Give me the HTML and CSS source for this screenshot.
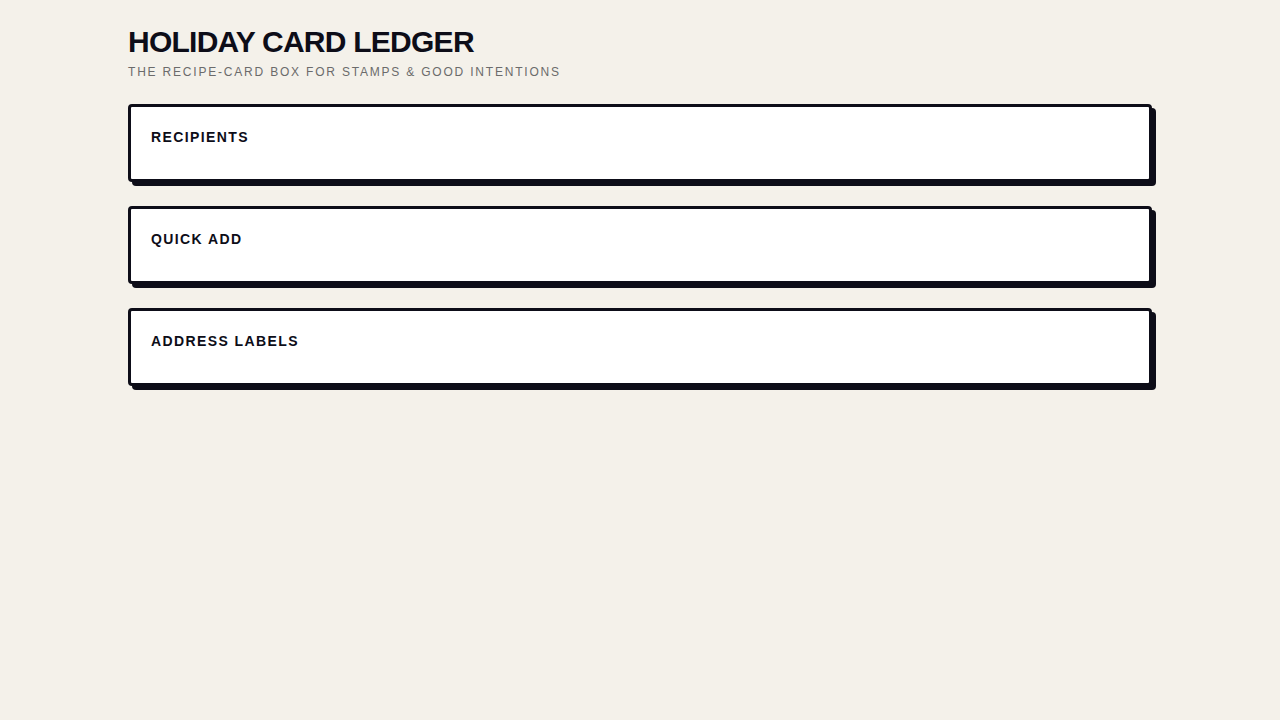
FILE: index.html
```html
<!DOCTYPE html>
<html>
<head>
<meta charset="utf-8">
<link rel="stylesheet" href="styles.css">
</head>
<body>
<main class="page">
  <header class="masthead">
    <h1 class="title">HOLIDAY CARD LEDGER</h1>
    <p class="subtitle">THE RECIPE-CARD BOX FOR STAMPS &amp; GOOD INTENTIONS</p>
  </header>
  <section class="card"><h2 class="card-title">RECIPIENTS</h2></section>
  <section class="card"><h2 class="card-title">QUICK ADD</h2></section>
  <section class="card"><h2 class="card-title">ADDRESS LABELS</h2></section>
</main>
</body>
</html>
```
FILE: styles.css
```css
html, body {
  margin: 0;
  padding: 0;
  background: #f4f1ea;
  font-family: "Liberation Sans", Arial, sans-serif;
  color: #0d0d18;
}
body {
  min-height: 720px;
}
.page {
  width: 1024px;
  margin: 0 auto;
  padding: 24px 0 40px 0;
  display: flex;
  flex-direction: column;
  gap: 24px;
}
.masthead {
  display: flex;
  flex-direction: column;
}
.title {
  margin: 0;
  font-size: 30px;
  line-height: 36px;
  font-weight: 700;
  letter-spacing: -0.75px;
}
.subtitle {
  margin: 4px 0 0 0;
  font-size: 12px;
  line-height: 16px;
  letter-spacing: 1.8px;
  color: #6b6b6b;
}
.card {
  background: #ffffff;
  border: 3px solid #0d0d18;
  border-radius: 4px;
  box-shadow: 4px 4px 0 #0d0d18;
  padding: 20px 20px 32px 20px;
}
.card-title {
  margin: 0;
  font-size: 14px;
  line-height: 20px;
  font-weight: 700;
  letter-spacing: 1.4px;
}
```
